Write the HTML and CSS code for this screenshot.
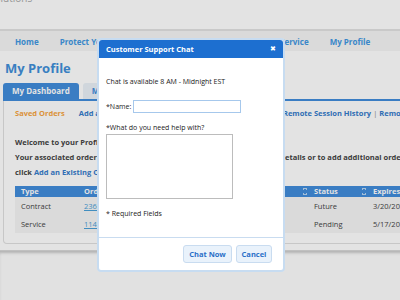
FILE: index.html
```html
<!DOCTYPE html>
<html lang="en">
<head>
  <meta charset="UTF-8">
  <title>My Profile</title>
  <link rel="stylesheet" href="styles.css">
</head>
<body>

<div class="page">
  <header class="site-header">
    <span class="brand">Solutions</span>
  </header>

  <nav class="main-nav">
    <a href="#">Home</a>
    <a href="#">Protect Your Computer</a>
    <a href="#">Remote Technical Support Service</a>
    <a href="#">My Profile</a>
  </nav>

  <section class="content">
    <h1>My Profile</h1>

    <div class="tabs">
      <a href="#" class="tab active">My Dashboard</a>
      <a href="#" class="tab">My Account</a>
    </div>

    <div class="panel">
      <div class="subnav">
        <a href="#" class="current">Saved Orders</a>
        <a href="#">Add an Existing Order</a>
        <a href="#" class="remote">Remote Session History</a>
        <span class="sep">|</span>
        <a href="#">Remote Support</a>
      </div>

      <p class="intro">
        Welcome to your Profile page.<br>
        Your associated orders are listed below. Select any order to view all its details or to add additional orders,<br>
        click <a href="#">Add an Existing Order</a>.
      </p>

      <table class="orders">
        <colgroup>
          <col class="c-type"><col class="c-order"><col class="c-product"><col class="c-status"><col class="c-expires">
        </colgroup>
        <tr>
          <th>Type</th>
          <th>Order #</th>
          <th class="sortable"><span class="sort"></span>Product</th>
          <th class="sortable"><span class="sort"></span>Status</th>
          <th class="sortable"><span class="sort"></span>Expires</th>
        </tr>
        <tr>
          <td>Contract</td>
          <td><a href="#">23614587</a></td>
          <td class="pad">Premium Support</td>
          <td class="pad">Future</td>
          <td class="pad">3/20/2014</td>
        </tr>
        <tr>
          <td>Service</td>
          <td><a href="#">11472209</a></td>
          <td class="pad">Virus Removal</td>
          <td class="pad">Pending</td>
          <td class="pad">5/17/2013</td>
        </tr>
      </table>
    </div>
  </section>

  <footer class="site-footer"></footer>
</div>

<div class="overlay"></div>

<div class="dialog">
  <div class="dialog-title">
    <span>Customer Support Chat</span>
    <button class="close">&#x2716;</button>
  </div>
  <div class="dialog-body">
    <p class="hours">Chat is available 8 AM - Midnight EST</p>
    <div class="field-row">
      <label for="name">*Name:</label>
      <input type="text" id="name">
    </div>
    <label for="help" class="block-label">*What do you need help with?</label>
    <textarea id="help"></textarea>
    <p class="required">* Required Fields</p>
  </div>
  <div class="dialog-buttons">
    <button class="chat-now">Chat Now</button>
    <button class="cancel">Cancel</button>
  </div>
</div>

</body>
</html>
```

FILE: styles.css
```css
body {
  margin: 0;
  font-family: "Open Sans", sans-serif;
  background: white;
  overflow: hidden;
  width: 400px;
  height: 300px;
}

.page {
  width: 520px;
}

.site-header {
  height: 29px;
  border-bottom: 2px solid #e2e2e2;
  overflow: hidden;
}

.brand {
  display: block;
  margin: -8px 0 0 -11px;
  font-size: 10px;
  line-height: 12px;
  color: #a8a8a8;
}

.main-nav {
  background: #f5f5f5;
  height: 20px;
  display: flex;
  align-items: center;
  gap: 21px;
  padding-left: 15px;
}

.main-nav a {
  color: #4298e2;
  font-size: 8px;
  font-weight: bold;
  text-decoration: none;
  white-space: nowrap;
}

.content {
  padding: 7px 0 0 3px;
}

.content h1 {
  margin: 0 0 0 2px;
  font-size: 13px;
  line-height: 20px;
  color: #418fd9;
}

.tabs {
  margin-top: 5px;
  display: flex;
  gap: 4px;
  border-bottom: 2px solid #428ddc;
}

.tab {
  height: 16px;
  line-height: 16px;
  padding: 0 9px;
  border-radius: 3px 3px 0 0;
  font-size: 8px;
  font-weight: bold;
  text-decoration: none;
  white-space: nowrap;
  color: #428ddc;
  background: #eaf1f8;
}

.tab.active {
  background: #428ddc;
  color: white;
}

.panel {
  border: 1px solid #e0e0e0;
  border-top: none;
  border-radius: 0 0 0 4px;
  padding: 6px 0 6px 11px;
  height: 130px;
}

.subnav {
  display: flex;
  align-items: center;
  gap: 14px;
  height: 12px;
  font-size: 7.5px;
  font-weight: bold;
  white-space: nowrap;
}

.subnav a {
  color: #357bcb;
  text-decoration: none;
}

.subnav a.current {
  color: #f7a53f;
}

.subnav a.remote {
  margin-left: 109px;
}

.subnav .sep {
  margin: 0 -12px;
  color: #888;
  font-weight: normal;
}

.intro {
  margin: 16px 0 0;
  font-size: 7.5px;
  line-height: 15px;
  font-weight: bold;
  color: #444;
  white-space: nowrap;
}

.intro a {
  color: #357bcb;
  text-decoration: none;
}

.orders {
  margin-top: 6px;
  border-collapse: collapse;
  table-layout: fixed;
  width: 421px;
  font-size: 7.5px;
  color: #444;
  background: #f5f5f5;
}

.c-type { width: 63px; }
.c-order { width: 110px; }
.c-product { width: 109px; }
.c-status { width: 59px; }
.c-expires { width: 80px; }

.orders th {
  background: #428ddc;
  color: white;
  text-align: left;
  height: 11px;
  line-height: 11px;
  padding: 0 0 0 6px;
  font-weight: bold;
  white-space: nowrap;
}

.orders td {
  height: 18px;
  padding: 0 0 0 6px;
  white-space: nowrap;
  overflow: hidden;
}

.orders td.pad {
  padding-left: 17px;
}

.orders td a {
  color: #4aa0d8;
}

.sort {
  display: inline-block;
  width: 4px;
  height: 7px;
  margin-right: 7px;
  vertical-align: -1px;
  background:
    linear-gradient(to top left, transparent 50%, #b9d6f2 50%) 0 0 / 2px 3px no-repeat,
    linear-gradient(to top right, transparent 50%, #b9d6f2 50%) 2px 0 / 2px 3px no-repeat,
    linear-gradient(to bottom left, transparent 50%, #b9d6f2 50%) 0 4px / 2px 3px no-repeat,
    linear-gradient(to bottom right, transparent 50%, #b9d6f2 50%) 2px 4px / 2px 3px no-repeat;
}

.site-footer {
  margin-top: 6px;
  height: 60px;
  border-top: 1px solid #d8d8d8;
  box-shadow: inset 0 3px 3px -1px #c8c8c8;
  background: #fdfdfd;
}

/* modal */

.overlay {
  position: fixed;
  top: 0;
  left: 0;
  right: 0;
  bottom: 0;
  background: rgba(0, 0, 0, 0.11);
}

.dialog {
  position: fixed;
  left: 97px;
  top: 38px;
  width: 184px;
  height: 230px;
  background: white;
  border: 2px solid #c7dcf1;
  border-radius: 4px;
  display: flex;
  flex-direction: column;
  font-size: 7px;
  color: #222;
}

.dialog-title {
  height: 18px;
  background: #1d6fd0;
  border-radius: 3px 3px 0 0;
  display: flex;
  align-items: center;
  justify-content: space-between;
  padding: 0 7px;
  color: white;
  font-weight: bold;
  font-size: 7.5px;
}

.close {
  background: transparent;
  border: none;
  color: white;
  font-size: 7px;
  padding: 0;
  cursor: pointer;
}

.dialog-body {
  flex: 1;
  padding: 0 7px;
}

.hours {
  margin: 19px 0 0;
  line-height: 10px;
}

.field-row {
  margin-top: 13px;
  display: flex;
  align-items: center;
  gap: 2px;
}

.field-row input {
  width: 104px;
  height: 9px;
  border: 1px solid #a6c8ec;
  padding: 1px;
  font-size: 7px;
}

.block-label {
  display: block;
  margin-top: 10px;
  line-height: 10px;
}

.dialog textarea {
  display: block;
  margin-top: 1px;
  width: 123px;
  height: 61px;
  border: 1px solid #bcbcbc;
  padding: 1px;
  resize: none;
}

.required {
  margin: 10px 0 0;
  line-height: 10px;
}

.dialog-buttons {
  border-top: 1px solid #c9dcf0;
  height: 32px;
  display: flex;
  align-items: center;
  justify-content: flex-end;
  gap: 4px;
  padding-right: 11px;
}

.dialog-buttons button {
  height: 18px;
  padding: 0;
  background: #e9f2fb;
  border: 1px solid #c9dcf0;
  border-radius: 3px;
  color: #2a6fc8;
  font-family: "Open Sans", sans-serif;
  font-size: 7.5px;
  font-weight: bold;
  cursor: pointer;
}

.dialog-buttons .chat-now {
  width: 49px;
}

.dialog-buttons .cancel {
  width: 36px;
}
```
